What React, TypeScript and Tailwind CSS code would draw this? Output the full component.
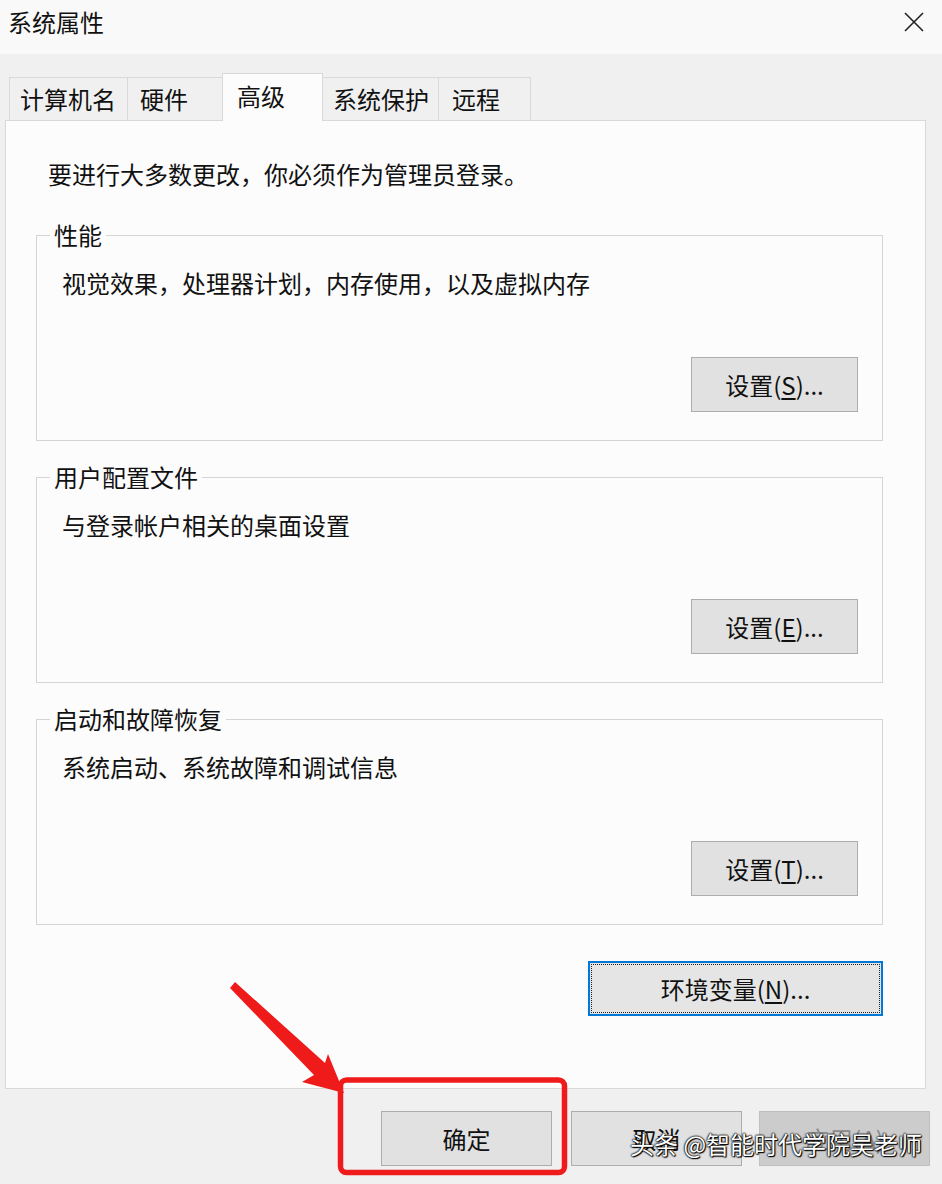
import React from "react";

const btn =
  "flex items-center justify-center bg-[#e1e1e1] border border-[#adadad] text-[24px] leading-[32px] text-[#111]";

function GroupBox({
  title,
  desc,
  label,
  hot,
}: {
  title: string;
  desc: string;
  label: string;
  hot: string;
}) {
  return (
    <fieldset className="border border-[#d5d5d5] mt-[22px] first:mt-[31px] w-[847px]">
      <legend className="ml-[13px] px-[4px] text-[24px] leading-[28px] text-[#111]">{title}</legend>
      <p className="mt-[18px] pl-[25px] text-[24px] leading-[32px] text-[#111]">{desc}</p>
      <div className="flex justify-end pr-[24px] mt-[58px] pb-[28px]">
        <div className={`${btn} w-[167px] h-[55px]`}>
          <span>
            {label}(<span className="underline underline-offset-[3px]">{hot}</span>)...
          </span>
        </div>
      </div>
    </fieldset>
  );
}

export default function App() {
  const tabs = [
    { t: "计算机名", w: "w-[119px]", pl: "pl-[10px]" },
    { t: "硬件", w: "w-[96px]", pl: "pl-[12px]" },
    { t: "高级", w: "w-[101px]", pl: "pl-[14px]", sel: true },
    { t: "系统保护", w: "w-[117px]", pl: "pl-[10px]" },
    { t: "远程", w: "w-[93px]", pl: "pl-[13px]" },
  ];
  return (
    <div className="relative w-[942px] h-[1184px] overflow-hidden bg-[#f0f0f0] font-['Noto_Sans_CJK_SC','Noto_Sans',sans-serif] text-[#111]">
      {/* title bar */}
      <div className="h-[54px] bg-[#f9f9f9] flex items-start justify-between pl-[8px] pr-[18px]">
        <div className="pt-[8px] text-[24px] leading-[28px]">系统属性</div>
        <svg width="20" height="20" viewBox="0 0 20 20" className="mt-[12px]">
          <path d="M1 1 L19 19 M19 1 L1 19" stroke="#222" strokeWidth="1.6" fill="none" />
        </svg>
      </div>

      {/* tabs */}
      <div className="h-[66px] flex items-end pl-[9px]">
        {tabs.map((tab, i) =>
          tab.sel ? (
            <div
              key={i}
              className={`relative z-10 -ml-px -mb-px h-[48px] ${tab.w} ${tab.pl} flex items-center pb-[4px] bg-[#fcfcfc] border-t border-l border-r border-[#d9d9d9] text-[24px] leading-[28px]`}
            >
              {tab.t}
            </div>
          ) : (
            <div
              key={i}
              className={`${i > 0 ? "-ml-px" : ""} h-[43px] ${tab.w} ${tab.pl} flex items-center bg-[#f0f0f0] border-t border-l border-r border-[#d9d9d9] text-[24px] leading-[28px]`}
            >
              {tab.t}
            </div>
          )
        )}
      </div>

      {/* panel */}
      <div className="ml-[5px] w-[921px] h-[969px] border border-[#d9d9d9] bg-[#fcfcfc] pt-[37px] pl-[30px]">
        <p className="pl-[12px] text-[24px] leading-[32px]">要进行大多数更改，你必须作为管理员登录。</p>
        <div className="flex flex-col">
          <GroupBox title="性能" desc="视觉效果，处理器计划，内存使用，以及虚拟内存" label="设置" hot="S" />
          <GroupBox title="用户配置文件" desc="与登录帐户相关的桌面设置" label="设置" hot="E" />
          <GroupBox title="启动和故障恢复" desc="系统启动、系统故障和调试信息" label="设置" hot="T" />
        </div>
        <div className="w-[847px] flex justify-end mt-[36px]">
          <div className="w-[295px] h-[55px] border-2 border-[#0078d7] bg-[#e5e5e5] p-px">
            <div className="w-full h-full border border-dotted border-[#222] flex items-center justify-center text-[24px] leading-[32px]">
              <span>
                环境变量(<span className="underline underline-offset-[3px]">N</span>)...
              </span>
            </div>
          </div>
        </div>
      </div>

      {/* bottom buttons */}
      <div className="flex mt-[22px] pl-[381px]">
        <div className={`${btn} w-[171px] h-[55px]`}>确定</div>
        <div className={`${btn} w-[171px] h-[55px] ml-[19px]`}>取消</div>
        <div className="ml-[17px] w-[171px] h-[55px] flex items-center justify-center bg-[#cccccc] border border-[#bfbfbf] text-[24px] leading-[32px] text-[#8a8a8a]">
          应用(A)
        </div>
      </div>

      {/* annotation overlay */}
      <svg
        className="absolute left-0 top-0 pointer-events-none"
        width="942"
        height="1184"
        viewBox="0 0 942 1184"
      >
        <rect x="340.5" y="1080" width="224" height="92.5" rx="6" fill="none" stroke="#ef1b1b" strokeWidth="5.5" />
        <polygon
          points="230,988 235,982 325,1063 328,1054 344,1093 302,1082 314,1075"
          fill="#ef1b1b"
        />
      </svg>

      {/* watermark */}
      <div className="absolute left-[630px] top-[1128px] text-[24px] leading-[32px] text-white whitespace-nowrap [text-shadow:0_0_2px_#000,0_0_2px_#000,0_0_1px_#000,1px_1px_1px_#000]">
        头条 @智能时代学院吴老师
      </div>
    </div>
  );
}
